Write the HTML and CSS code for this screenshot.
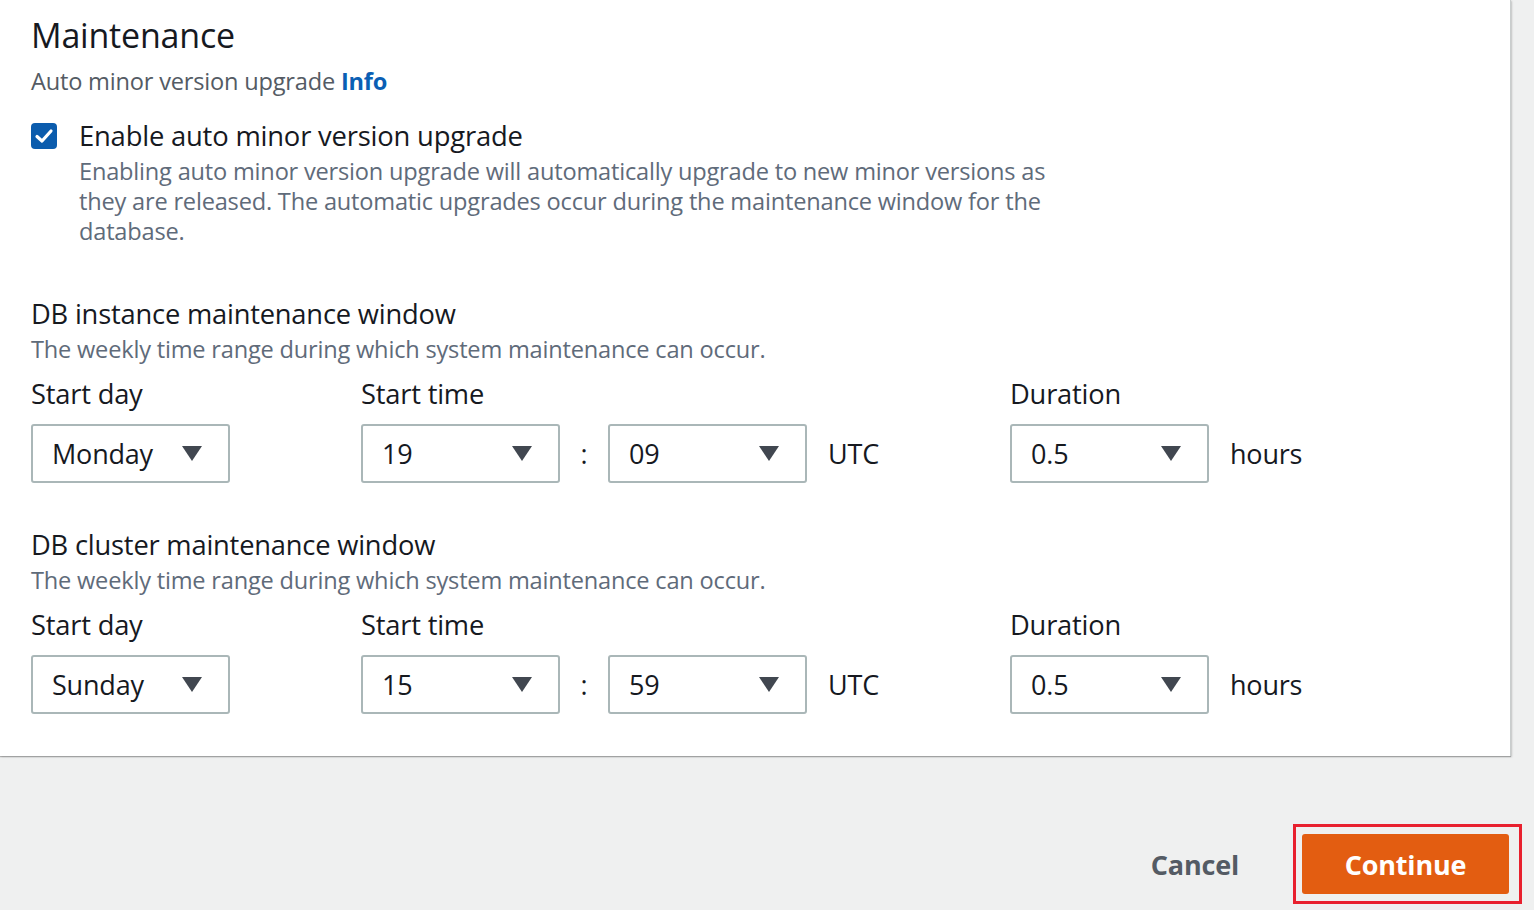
FILE: index.html
```html
<!DOCTYPE html>
<html>
<head>
<meta charset="utf-8">
<link rel="stylesheet" href="styles.css">
</head>
<body>
<div class="page">
  <section class="panel">
    <h2 class="title">Maintenance</h2>
    <div class="field-label">Auto minor version upgrade <a class="info">Info</a></div>
    <div class="check-row">
      <span class="checkbox">
        <svg width="26" height="26" viewBox="0 0 26 26"><rect x="0" y="0" width="26" height="26" rx="4" fill="#0b5cad"/><path d="M6 13.5 L11 18 L20 8" fill="none" stroke="#fff" stroke-width="3.2" stroke-linecap="round" stroke-linejoin="round"/></svg>
      </span>
      <div class="check-text">
        <div class="check-label">Enable auto minor version upgrade</div>
        <div class="check-desc">Enabling auto minor version upgrade will automatically upgrade to new minor versions as they are released. The automatic upgrades occur during the maintenance window for the database.</div>
      </div>
    </div>

    <div class="window first">
      <div class="win-title">DB instance maintenance window</div>
      <div class="win-desc">The weekly time range during which system maintenance can occur.</div>
      <div class="grid">
        <div class="col">
          <div class="lbl">Start day</div>
          <div class="sel"><span>Monday</span><i class="tri"></i></div>
        </div>
        <div class="col">
          <div class="lbl">Start time</div>
          <div class="row">
            <div class="sel"><span>19</span><i class="tri"></i></div>
            <span class="colon">:</span>
            <div class="sel"><span>09</span><i class="tri"></i></div>
            <span class="unit">UTC</span>
          </div>
        </div>
        <div class="col">
          <div class="lbl">Duration</div>
          <div class="row">
            <div class="sel"><span>0.5</span><i class="tri"></i></div>
            <span class="unit">hours</span>
          </div>
        </div>
      </div>
    </div>

    <div class="window second">
      <div class="win-title">DB cluster maintenance window</div>
      <div class="win-desc">The weekly time range during which system maintenance can occur.</div>
      <div class="grid">
        <div class="col">
          <div class="lbl">Start day</div>
          <div class="sel"><span>Sunday</span><i class="tri"></i></div>
        </div>
        <div class="col">
          <div class="lbl">Start time</div>
          <div class="row">
            <div class="sel"><span>15</span><i class="tri"></i></div>
            <span class="colon">:</span>
            <div class="sel"><span>59</span><i class="tri"></i></div>
            <span class="unit">UTC</span>
          </div>
        </div>
        <div class="col">
          <div class="lbl">Duration</div>
          <div class="row">
            <div class="sel"><span>0.5</span><i class="tri"></i></div>
            <span class="unit">hours</span>
          </div>
        </div>
      </div>
    </div>
  </section>

  <div class="actions">
    <button class="cancel">Cancel</button>
    <div class="highlight"><button class="continue">Continue</button></div>
  </div>
</div>
</body>
</html>
```

FILE: styles.css
```css
* { box-sizing: border-box; }
html, body { margin: 0; padding: 0; }
body {
  background: #eff0f0;
  font-family: "Open Sans", "Noto Sans", Arial, sans-serif;
  color: #16191f;
  width: 1534px;
  height: 910px;
  overflow: hidden;
}
.page { width: 1534px; }
.panel {
  width: 1511px;
  height: 756px;
  background: #fff;
  border-right: 1px solid #c9cdcd;
  box-shadow: 0 1px 1px rgba(0,0,0,0.25), 1px 1px 2px rgba(0,0,0,0.15);
  padding: 13px 0 0 31px;
}
.title {
  margin: 0;
  font-size: 34px;
  font-weight: 400;
  line-height: 44px;
  letter-spacing: -0.2px;
}
.field-label {
  margin-top: 9px;
  font-size: 23.6px;
  line-height: 30px;
  color: #545b64;
  letter-spacing: -0.2px;
}
.info { color: #0a5fb4; font-weight: 700; }
.check-row {
  display: flex;
  margin-top: 20px;
}
.checkbox { width: 48px; flex: none; padding-top: 7px; }
.checkbox svg { display: block; }
.check-label {
  font-size: 27.4px;
  line-height: 40px;
  letter-spacing: -0.2px;
}
.check-desc {
  width: 1010px;
  font-size: 23.6px;
  line-height: 30px;
  color: #5f6b7a;
  letter-spacing: -0.2px;
}
.window.first { margin-top: 48px; }
.window.second { margin-top: 42px; }
.win-title {
  font-size: 27.3px;
  line-height: 40px;
  letter-spacing: -0.2px;
}
.win-desc {
  font-size: 23.6px;
  line-height: 30px;
  color: #5f6b7a;
  letter-spacing: -0.2px;
}
.grid {
  display: grid;
  grid-template-columns: 330px 649px auto;
  margin-top: 10px;
}
.lbl {
  font-size: 27.3px;
  line-height: 40px;
  letter-spacing: -0.2px;
  margin-bottom: 10px;
}
.row { display: flex; align-items: center; }
.sel {
  width: 199px;
  height: 59px;
  border: 2px solid #aab7b8;
  border-radius: 3px;
  display: flex;
  align-items: center;
  justify-content: space-between;
  padding: 0 26px 0 19px;
  font-size: 27px;
  letter-spacing: -0.2px;
}
.tri {
  width: 0; height: 0;
  border-left: 10px solid transparent;
  border-right: 10px solid transparent;
  border-top: 15px solid #414750;
}
.colon {
  width: 48px;
  text-align: center;
  font-size: 27px;
}
.unit {
  margin-left: 21px;
  font-size: 27px;
  letter-spacing: -0.2px;
}
.actions {
  display: flex;
  justify-content: flex-end;
  align-items: center;
  padding: 68px 12px 0 0;
}
.cancel {
  background: none;
  border: none;
  font-family: inherit;
  font-size: 27px;
  font-weight: 700;
  color: #545b64;
  margin-right: 54px;
  padding: 0;
  letter-spacing: -0.2px;
}
.highlight {
  border: 3px solid #e8202e;
  padding: 7px 10px 7px 6px;
}
.continue {
  display: block;
  width: 207px;
  height: 60px;
  background: #e35d11;
  color: #fff;
  border: none;
  border-radius: 3px;
  font-family: inherit;
  font-size: 27px;
  font-weight: 700;
  letter-spacing: -0.2px;
}
```
